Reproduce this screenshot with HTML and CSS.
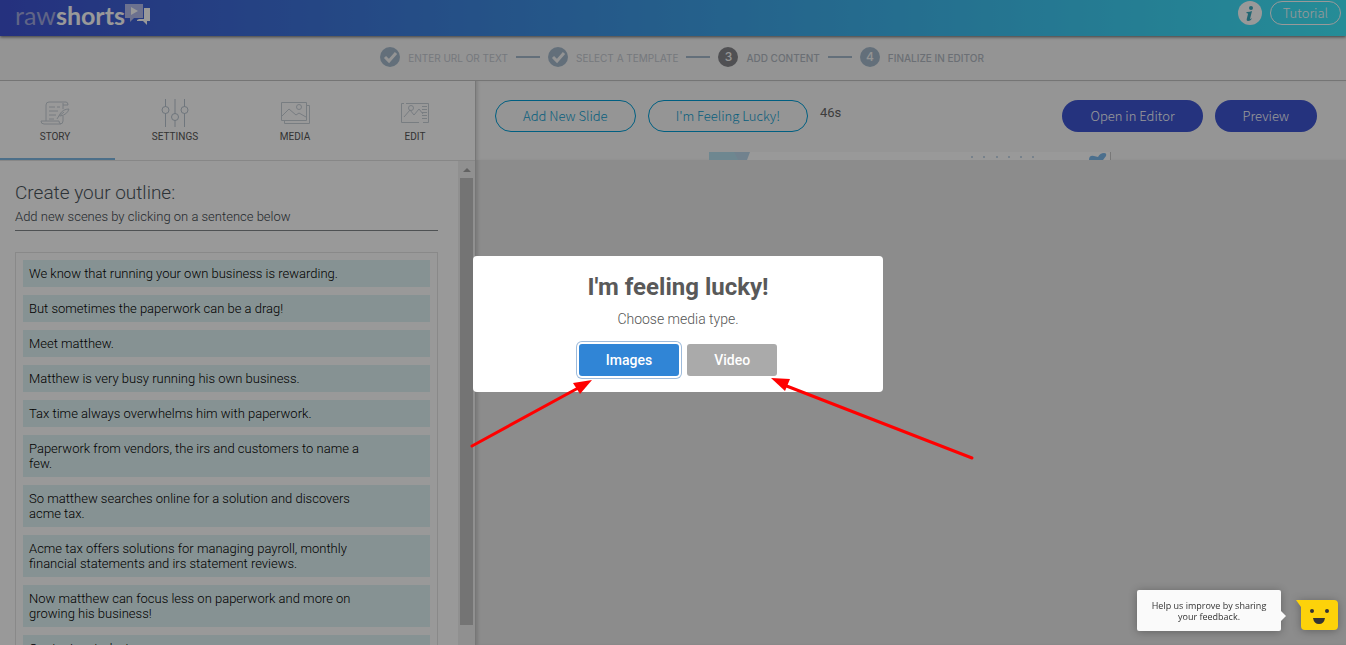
FILE: index.html
```html
<!DOCTYPE html>
<html lang="en">
<head>
<meta charset="utf-8">
<title>Raw Shorts</title>
<link rel="stylesheet" href="styles.css">
</head>
<body>
<div class="app">
  <header class="topbar">
    <a class="logo" href="#" aria-label="rawshorts"><span class="logo-raw">raw</span><span class="logo-shorts">shorts</span><svg class="logo-mark" width="26" height="22" viewBox="0 0 26 22" aria-hidden="true"><path d="M0 1h18v14h-9l-4 4v-4h-5z" fill="#b4bcef"/><path d="M6 4l7 4-7 4z" fill="#fff"/><path d="M19 5h6v13h-3v4l-4-4h-6v-1l2-1h5z" fill="#fff"/></svg></a>
    <div class="top-actions">
      <button class="info" type="button" aria-label="Information"><svg width="24" height="24" viewBox="0 0 24 24" aria-hidden="true"><circle cx="12" cy="12" r="12" fill="#fff"/><circle cx="13" cy="7" r="2" fill="#3aaabf"/><path d="M9 11q3 0 5-1l-2 8q1 0 2-1-1 3-4 3-2 0-1-3l1-4q0-1-2-1z" fill="#3aaabf"/></svg></button>
      <button class="tutorial" type="button">Tutorial</button>
    </div>
  </header>

  <ol class="steps">
    <li class="step"><svg width="20" height="20" viewBox="0 0 20 20" aria-hidden="true"><circle cx="10" cy="10" r="10" fill="#a5bacc"/><path d="M5 10l4 4 7-8" fill="none" stroke="#f7f7f7" stroke-width="3"/></svg><span class="step-label faded">ENTER URL OR TEXT</span></li>
    <li class="step"><svg width="20" height="20" viewBox="0 0 20 20" aria-hidden="true"><circle cx="10" cy="10" r="10" fill="#a5bacc"/><path d="M5 10l4 4 7-8" fill="none" stroke="#f7f7f7" stroke-width="3"/></svg><span class="step-label faded">SELECT A TEMPLATE</span></li>
    <li class="step"><span class="step-num current">3</span><span class="step-label">ADD CONTENT</span></li>
    <li class="step"><span class="step-num">4</span><span class="step-label">FINALIZE IN EDITOR</span></li>
  </ol>

  <main class="main">
    <aside class="side">
      <nav class="tabs">
        <a class="tab active" href="#"><svg width="30" height="28" viewBox="0 0 30 28" aria-hidden="true"><path d="M6 22V6q0-3 3-3h17q2 0 2 3h-5M23 4v6M23 17v5q0 3-3 3H4q-3 0-3-3h18q0 3 2 3M9 8h6M17 8h3M9 12h9M9 16h7M9 20h5M17 20l3-5q3-5 9-5-2 6-9 7M18 18l6-5"/></svg><span>STORY</span></a>
        <a class="tab" href="#"><svg class="sliders" width="30" height="28" viewBox="0 0 30 28" aria-hidden="true"><path d="M5.500 0v8M5.500 14v14M15 0v15M15 21v7M24.500 0v8M24.500 14v14"/><circle cx="5.500" cy="11" r="3.500"/><circle cx="15" cy="18" r="3.500"/><circle cx="24.500" cy="11" r="3.500"/></svg><span>SETTINGS</span></a>
        <a class="tab" href="#"><svg width="30" height="28" viewBox="0 0 30 28" aria-hidden="true"><path d="M1.500 3.500h25v18h-25zM27 6.500h2.500v18h-25V22M2 17l7-7 7 6 3-2 7 4"/><circle cx="19" cy="8" r="2.500"/></svg><span>MEDIA</span></a>
        <a class="tab" href="#"><svg width="30" height="28" viewBox="0 0 30 28" aria-hidden="true"><path d="M6 4.500h22.500v19H23M19 23.500H1.500v-19H4M4 18l6-7 4 5 5-6 4 5M22 7.500h5M22 10.500h5M22 13.500h5M22 16.500h5M22 19.500h5"/><circle cx="11" cy="9" r="2.500"/></svg><span>EDIT</span></a>
      </nav>
      <div class="side-body">
        <section class="outline">
          <h1>Create your outline:</h1>
          <p class="hint">Add new scenes by clicking on a sentence below</p>
          <ul class="sentences">
            <li>We know that running your own business is rewarding.</li>
            <li>But sometimes the paperwork can be a drag!</li>
            <li>Meet matthew.</li>
            <li>Matthew is very busy running his own business.</li>
            <li>Tax time always overwhelms him with paperwork.</li>
            <li>Paperwork from vendors, the irs and customers to name a few.</li>
            <li>So matthew searches online for a solution and discovers acme tax.</li>
            <li>Acme tax offers solutions for managing payroll, monthly financial statements and irs statement reviews.</li>
            <li>Now matthew can focus less on paperwork and more on growing his business!</li>
            <li>Contact us today!</li>
          </ul>
        </section>
        <div class="scrollbar"><span class="scroll-arrow"></span><span class="scroll-thumb"></span></div>
      </div>
    </aside>

    <section class="stage">
      <div class="toolbar">
        <div class="tools">
          <button class="pill outline-pill" type="button">Add New Slide</button>
          <button class="pill outline-pill" type="button">I'm Feeling Lucky!</button>
          <span class="duration">46s</span>
          <button class="pill solid-pill push" type="button">Open in Editor</button>
          <button class="pill solid-pill" type="button">Preview</button>
        </div>
        <svg class="slide-edge" width="402" height="8" viewBox="0 0 402 8" aria-hidden="true"><path d="M0 0h402v8H0z" fill="#fff"/><path d="M0 0h26l4 8H0z" fill="#b8e2f0"/><path d="M25 0h16l-3 8h-9z" fill="#bcd9ed"/><g fill="#b3cde2"><circle cx="263" cy="5" r="1"/><circle cx="275" cy="5" r="1"/><circle cx="288" cy="5" r="1"/><circle cx="300" cy="5" r="1"/><circle cx="312" cy="5" r="1"/><circle cx="324" cy="5" r="1"/></g><path d="M380 8q0-5 5-4l4 1q2-4 6-4 3 0 2 3l-3 4z" fill="#7eb9ec"/><path d="M401 0h1v8h-1z" fill="#c8c8c8"/></svg>
      </div>
    </section>
  </main>
</div>

<div class="backdrop">
  <div class="modal" role="dialog" aria-labelledby="lucky-title">
    <h2 id="lucky-title">I'm feeling lucky!</h2>
    <p>Choose media type.</p>
    <div class="choices">
      <button class="choice primary" type="button">Images</button>
      <button class="choice" type="button">Video</button>
    </div>
    <svg class="arrows" width="500" height="206" viewBox="0 0 500 206" aria-hidden="true"><g fill="none" stroke="#f00" stroke-width="3" stroke-linecap="round"><path d="M-1 190L107 131"/><path d="M499 202L311 129"/></g><g fill="#f00"><path d="M119 124l-19 3 7 11z"/><path d="M298 122l19 1-5 12z"/></g></svg>
  </div>
</div>

<aside class="feedback">
  <p class="bubble">Help us improve by sharing your feedback.</p>
  <button class="smiley" type="button" aria-label="Feedback"><svg width="42" height="31" viewBox="0 0 42 31" aria-hidden="true"><path d="M0 0h38q4 0 4 4v22q0 4-4 4H9q-4 0-4-4V7z" fill="#fdd20a"/><circle cx="16" cy="11" r="2" fill="#333"/><circle cx="31" cy="11" r="2" fill="#333"/><path d="M17 18h12q-1 6-6 6t-6-6z" fill="#333"/></svg></button>
</aside>
</body>
</html>
```
FILE: styles.css
```css
* { box-sizing: border-box; }

body {
  margin: 0;
  height: 100vh;
  overflow: hidden;
  font-family: Roboto, "Liberation Sans", sans-serif;
  color: #3f474c;
}

button { margin: 0; padding: 0; border: 0; background: none; font: inherit; cursor: pointer; }
a { color: inherit; text-decoration: none; }
h1, h2, p, ul, ol { margin: 0; padding: 0; }
ul, ol { list-style: none; }
svg { display: block; flex: none; }

.app { display: flex; flex-direction: column; height: 100vh; }

.topbar {
  display: flex;
  flex: none;
  justify-content: space-between;
  align-items: flex-start;
  height: 36px;
  padding: 1px 5px 0 15px;
  background: linear-gradient(90deg, #3f52d3, #3feafc);
  box-shadow: 0 1px 3px rgba(0, 0, 0, .6);
  z-index: 1;
}
.logo { display: flex; font: 25px/28px Lato, sans-serif; color: #fff; }
.logo-raw { color: #a0a8e0; }
.logo-shorts { font-weight: 700; }
.logo-mark { margin-top: 2px; }
.top-actions { display: flex; gap: 8px; }
.tutorial {
  height: 24px;
  padding: 0 12px;
  border: 1px solid #fff;
  border-radius: 12px;
  color: #fff;
  font: 300 13px/22px "Noto Sans CJK SC", sans-serif;
}

.steps {
  display: flex;
  flex: none;
  justify-content: center;
  align-items: center;
  height: 45px;
  padding: 0 0 3px 18px;
  background: #f7f7f7;
  border-bottom: 1px solid #c4c4c4;
}
.step { display: flex; align-items: center; gap: 8px; }
.step + .step::before { content: ""; width: 24px; height: 2px; margin-left: 8px; background: #a5bacc; }
.step-label { padding-top: 2px; font: 500 10px/14px Inter, sans-serif; color: #b3bac3; }
.step-label.faded { font-weight: 400; color: #c4c9d1; }
.step-num {
  width: 20px;
  height: 20px;
  border-radius: 50%;
  background: #a5bacc;
  color: #f7f7f7;
  font: 500 12px/20px Inter, sans-serif;
  text-align: center;
}
.step-num.current { background: #85868a; }

.main { display: flex; flex: 1; min-height: 0; }

.side {
  display: flex;
  flex: none;
  flex-direction: column;
  width: 475px;
  background: #fff;
  overflow: hidden;
}
.tabs {
  display: grid;
  flex: none;
  grid-template-columns: repeat(4, 120px);
  height: 80px;
  margin-left: -5px;
  border-bottom: 1px solid #e1e1e1;
}
.tab {
  display: flex;
  flex-direction: column;
  align-items: center;
  gap: 2px;
  padding-top: 18px;
  font: 400 10px/16px Roboto, sans-serif;
  color: #555;
}
.tab.active { border-bottom: 2px solid #7fb9e5; }
.tab svg { fill: none; stroke: #c8d0d8; stroke-width: 1; }
.tab .sliders { stroke: #b9c5d0; }

.side-body { display: flex; flex: 1; min-height: 0; }
.outline { flex: 1; padding: 20px 20px 0 15px; }
.outline h1 { font: 300 19px/24px Roboto, sans-serif; color: #4b555c; }
.hint {
  padding: 4px 0 5px;
  border-bottom: 1px solid #82878b;
  font-size: 13px;
  line-height: 16px;
  font-weight: 300;
  color: #3b454c;
}
.sentences {
  display: flex;
  flex-direction: column;
  gap: 8px;
  margin-top: 21px;
  padding: 7px;
  border: 1px solid #e4e4e4;
}
.sentences li {
  padding: 6px 50px 6px 6px;
  background: #e0f4f5;
  font-size: 13px;
  line-height: 15px;
  font-weight: 300;
  color: #000;
}
.scrollbar {
  display: flex;
  flex: none;
  flex-direction: column;
  align-items: center;
  gap: 6px;
  width: 17px;
  padding: 7px 0 20px;
  background: #f1f1f1;
}
.scroll-arrow { border: 4px solid transparent; border-top: 0; border-bottom-color: #a3a3a3; }
.scroll-thumb { flex: 1; width: 13px; background: #c1c1c1; }

.stage { flex: 1; min-width: 0; background: #e9e9e9; border-left: 1px solid #c6c6c6; box-shadow: inset 3px 0 3px -1px rgba(0, 0, 0, .12); }
.toolbar {
  display: flex;
  flex-direction: column;
  justify-content: space-between;
  height: 79px;
  padding: 19px 29px 0 19px;
  background: #f8f8f8;
  box-shadow: inset 3px 0 3px -1px rgba(0, 0, 0, .12);
}
.tools { display: flex; gap: 12px; }
.pill { height: 32px; border-radius: 16px; font: 300 13px/30px "Noto Sans CJK SC", sans-serif; }
.outline-pill { padding: 0 27px; border: 1px solid #009fd8; color: #0c9fd2; }
.solid-pill { padding: 0 28px; background: #3f56d3; color: #fff; }
.push { margin-left: auto; }
.duration { font-size: 13px; line-height: 26px; color: #666; }
.slide-edge { align-self: center; margin-left: 8px; }

.backdrop {
  position: fixed;
  inset: 0;
  z-index: 2;
  display: grid;
  place-items: center;
  padding: 3px 0 0 10px;
  background: rgba(0, 0, 0, .4);
}
.modal {
  position: relative;
  width: 410px;
  padding: 16px 20px;
  border-radius: 4px;
  background: #fff;
  text-align: center;
}
.modal h2 { font: 700 24px/30px Roboto, sans-serif; color: #595959; }
.modal p { padding: 7px 0 15px; font-size: 14px; line-height: 20px; font-weight: 300; color: #545454; }
.choices { display: flex; justify-content: center; gap: 8px; }
.choice {
  height: 32px;
  padding: 0 27px;
  border-radius: 3px;
  background: #aaa;
  color: #fff;
  font: 500 14px/32px Roboto, sans-serif;
}
.choice.primary { background: #3085d6; box-shadow: 0 0 0 2px #fff, 0 0 0 3px #9ebbdb; }
.arrows { position: absolute; left: 0; top: 0; overflow: visible; pointer-events: none; }

.feedback {
  position: fixed;
  right: 8px;
  bottom: 14px;
  z-index: 3;
  display: flex;
  align-items: flex-end;
  gap: 15px;
}
.bubble {
  position: relative;
  width: 144px;
  padding: 10px 12px 9px;
  border-radius: 2px;
  background: #fafafa;
  box-shadow: 0 1px 8px rgba(0, 0, 0, .3);
  font: 9px/11px "Open Sans", sans-serif;
  color: #333;
  text-align: center;
}
.bubble::after {
  content: "";
  position: absolute;
  left: 100%;
  top: 21px;
  border: 5px solid transparent;
  border-left-color: #fafafa;
  border-right: 0;
}
.smiley { filter: drop-shadow(0 1px 4px rgba(0, 0, 0, .3)); }
```
